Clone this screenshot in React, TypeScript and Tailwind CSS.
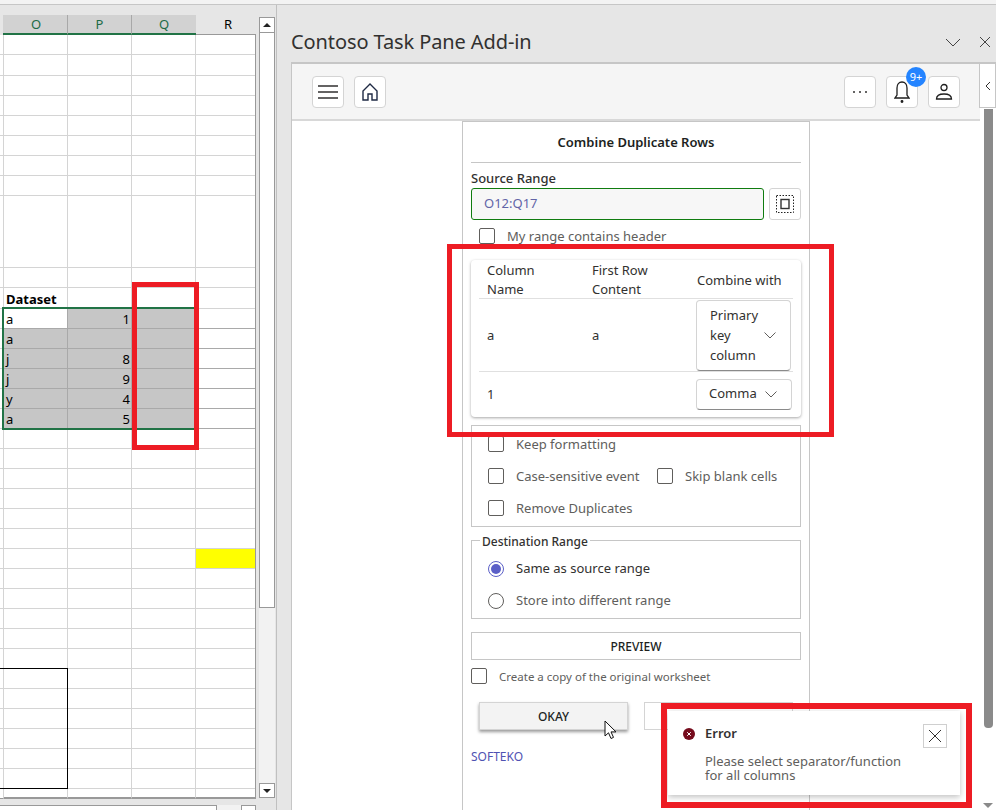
const rowHeights = [20, 21, 20, 20, 20, 20, 20, 20, 72, 20, 21, ...Array(24).fill(20), 10]

const dataRows: Record<number, [string, string]> = {
  11: ['a', '1'],
  12: ['a', ''],
  13: ['j', '8'],
  14: ['j', '9'],
  15: ['y', '4'],
  16: ['a', '5'],
}

function Checkbox() {
  return <span className="block h-4 w-4 shrink-0 rounded-[2px] border border-[#605e5c] bg-white" />
}

function CheckRow({ label }: { label: string }) {
  return (
    <div className="flex h-8 items-center gap-3">
      <Checkbox />
      <span className="pt-[2px] text-[13px] text-[#605e5c]">{label}</span>
    </div>
  )
}

function Chevron({ className }: { className: string }) {
  return (
    <svg className={className} width="12" height="7" viewBox="0 0 12 7" fill="none" stroke="#605e5c" strokeWidth="1">
      <path d="M0.500 0.500l5.500 5.500 5.500-5.500" />
    </svg>
  )
}

function ToolButton({ children }: { children: React.ReactNode }) {
  return (
    <div className="flex h-8 w-8 items-center justify-center rounded-[4px] border border-[#d4d4d4] bg-white">
      {children}
    </div>
  )
}

function Sheet() {
  return (
    <div className="flex h-[805px] w-[277px] shrink-0 border-r border-[#c0c0c0]">
      <div className="relative w-[256px] shrink-0">
        <div className="mt-[10px] flex h-[20px] text-center text-[13px] leading-[18px]">
          <div className="w-[3px]" />
          <div className="w-[65px] border-b-2 border-[#217346] border-r border-r-[#a8a8a8] bg-[#d2d2d2] pl-[2px] text-[#1d6b47]">O</div>
          <div className="w-[64px] border-b-2 border-[#217346] border-r border-r-[#a8a8a8] bg-[#d2d2d2] text-[#1d6b47]">P</div>
          <div className="w-[64px] border-b-2 border-[#217346] bg-[#d2d2d2] text-[#1d6b47]">Q</div>
          <div className="w-[60px] border-b border-[#999999] pl-[4px] text-black">R</div>
        </div>
        <div className="border-r border-[#999999] bg-white text-[13px] leading-[18px] text-black">
          {rowHeights.map((h, i) => {
            const data = dataRows[i]
            const last = i === rowHeights.length - 1
            const line = last ? 'border-b-2 border-b-[#999999]' : data ? 'border-b border-b-[#a9a9a9]' : 'border-b border-b-[#d4d4d4]'
            const colLine = data ? 'border-r border-r-[#a9a9a9]' : 'border-r border-r-[#d4d4d4]'
            return (
              <div key={i} className="flex" style={{ height: h }}>
                <div className={`w-[4px] border-r border-b border-[#d4d4d4] ${last ? 'border-b-[#999999]' : ''}`} />
                <div className={`w-[64px] pl-[2px] ${line} ${colLine} ${data && i !== 11 ? 'bg-[#c6c6c6]' : 'bg-white'} ${i === 10 ? 'pt-[2px] font-bold' : 'pt-[1px]'}`}>
                  {i === 10 ? 'Dataset' : data?.[0]}
                </div>
                <div className={`w-[64px] pr-[1px] pt-[1px] text-right ${line} ${colLine} ${data ? 'bg-[#c6c6c6]' : 'bg-white'}`}>{data?.[1]}</div>
                <div className={`w-[64px] ${line} ${colLine} ${data ? 'bg-[#c6c6c6]' : 'bg-white'}`} />
                <div className={`w-[59px] ${line} ${i === 23 ? 'bg-[#ffff00]' : 'bg-white'}`} />
              </div>
            )
          })}
        </div>
        {/* selection + bordered range sit on top of the cells */}
        <div className="absolute left-[2px] top-[302px] h-[123px] w-[194px] border-2 border-[#217346]" />
        <div className="absolute left-[-2px] top-[663px] h-[121px] w-[70px] border border-black" />
      </div>
      <div className="flex h-[793px] w-[20px] shrink-0 flex-col pt-[12px]">
        <div className="flex h-[781px] w-[16px] ml-[3px] flex-col bg-[#f2f2f2]">
          <div className="flex h-[16px] items-center justify-center border border-[#999999] bg-white">
            <span className="h-0 w-0 border-x-[4px] border-b-[4px] border-x-transparent border-b-[#222222]" />
          </div>
          <div className="h-[575px] border border-t-0 border-[#999999] bg-white" />
          <div className="mt-auto flex h-[15px] items-center justify-center border border-[#999999] bg-white">
            <span className="h-0 w-0 border-x-[4px] border-t-[4px] border-x-transparent border-t-[#222222]" />
          </div>
        </div>
      </div>
    </div>
  )
}

function TableCard() {
  return (
    <div className="mt-4 h-[157px] rounded-[4px] bg-white px-2 text-[13px] text-[#323130] shadow-[0_1px_3px_rgba(0,0,0,0.35)]">
      <div className="flex h-[39px] items-center border-b border-[#e0e0e0] pt-[2px] leading-[19px]">
        <div className="w-[105px] pl-2">Column<br />Name</div>
        <div className="w-[105px] pl-2">First Row<br />Content</div>
        <div className="pl-2">Combine with</div>
      </div>
      <div className="flex h-[73px] items-center border-b border-[#e0e0e0]">
        <div className="w-[105px] pl-2 pt-[2px]">a</div>
        <div className="w-[112px] pl-2 pt-[2px]">a</div>
        <div className="flex h-[71px] w-[95px] items-center rounded-[4px] border border-[#d4d4d4] border-b-[#8a8a8a] pl-[13px] leading-[20px]">
          <span className="w-[54px]">Primary key column</span>
          <Chevron className="ml-[0px]" />
        </div>
      </div>
      <div className="flex h-[44px] items-center">
        <div className="w-[217px] pl-2 pt-[2px]">1</div>
        <div className="flex h-[31px] w-[96px] items-center rounded-[4px] border border-[#d4d4d4] border-b-[#8a8a8a] pl-[12px]">
          <span className="w-[48px]">Comma</span>
          <Chevron className="ml-[8px]" />
        </div>
      </div>
    </div>
  )
}

function Toast() {
  return (
    <div className="absolute left-[668px] top-[711px] h-[84px] w-[292px] bg-white shadow-[0_2px_6px_rgba(0,0,0,0.25)]">
      <div className="flex items-start pl-[15px] pr-[13px] pt-[13px]">
        <div className="flex h-5 items-center gap-[10px]">
          <svg width="12" height="12" viewBox="0 0 12 12">
            <circle cx="6" cy="6" r="6" fill="#750b1c" />
            <path d="M4.200 4.200l3.600 3.600M7.800 4.200l-3.600 3.600" stroke="#ffffff" strokeWidth="1" />
          </svg>
          <span className="text-[13px] font-semibold text-[#323130]">Error</span>
        </div>
        <div className="ml-auto flex h-6 w-6 items-center justify-center border border-[#cfcfcf]">
          <svg width="14" height="14" viewBox="0 0 14 14" stroke="#323130" strokeWidth="1" fill="none">
            <path d="M1 1l12 12M13 1L1 13" />
          </svg>
        </div>
      </div>
      <div className="pl-[37px] pt-[6px] text-[13px] leading-[14px] text-[#605e5c]">
        Please select separator/function<br />for all columns
      </div>
    </div>
  )
}

function MainCard() {
  return (
    <div className="ml-[170px] h-[689px] w-[348px] overflow-hidden border border-b-0 border-[#c6c6c6] bg-white px-2">
      <div className="flex h-[41px] items-center justify-center border-b border-[#c6c6c6] pt-[2px] text-[13px] font-semibold text-[#201f1e]">
        Combine Duplicate Rows
      </div>
      <div className="h-[25px] pt-[6px] text-[13px] font-medium leading-[18px] text-[#323130]">Source Range</div>
      <div className="flex gap-[5px]">
        <div className="flex h-8 w-[293px] items-center rounded-[3px] border border-[#107c10] bg-[#f7f7f7] pl-3 text-[13px] text-[#6264a7]">O12:Q17</div>
        <div className="flex h-8 w-8 items-center justify-center rounded-[3px] border border-[#d4d4d4]">
          <svg width="18" height="18" viewBox="0 0 18 18" fill="none">
            <rect x="0.500" y="0.500" width="17" height="17" stroke="#222222" strokeDasharray="1.500 1.500" />
            <rect x="5" y="4.500" width="8" height="9" stroke="#333333" strokeWidth="1.400" />
          </svg>
        </div>
      </div>
      <div className="mt-2 flex h-4 items-center gap-3 pl-2">
        <Checkbox />
        <span className="pt-[2px] text-[13px] text-[#605e5c]">My range contains header</span>
      </div>
      <TableCard />
      <div className="mt-2 h-[102px] border border-[#c6c6c6] pl-4 pt-[2px]">
        <CheckRow label="Keep formatting" />
        <div className="flex">
          <div className="w-[169px]"><CheckRow label="Case-sensitive event" /></div>
          <CheckRow label="Skip blank cells" />
        </div>
        <CheckRow label="Remove Duplicates" />
      </div>
      <div className="relative mt-[13px] h-[79px] border border-[#c6c6c6] pl-4 pt-[12px] text-[13px]">
        <span className="absolute -top-[8px] left-[8px] bg-white px-[2px] text-[12px] font-medium leading-[18px] text-[#323130]">Destination Range</span>
        <div className="flex h-8 items-center gap-3">
          <span className="flex h-4 w-4 items-center justify-center rounded-full border border-[#5b5fc7]">
            <span className="h-[10px] w-[10px] rounded-full bg-[#5b5fc7]" />
          </span>
          <span className="text-[#323130]">Same as source range</span>
        </div>
        <div className="flex h-8 items-center gap-3">
          <span className="h-4 w-4 rounded-full border border-[#605e5c]" />
          <span className="text-[#605e5c]">Store into different range</span>
        </div>
      </div>
      <div className="mt-[13px] flex h-7 items-center justify-center border border-[#c6c6c6] pt-[2px] text-[12px] font-medium text-[#201f1e]">PREVIEW</div>
      <div className="mt-2 flex h-4 items-center gap-3">
        <Checkbox />
        <span className="pt-[2px] text-[11.5px] text-[#605e5c]">Create a copy of the original worksheet</span>
      </div>
      <div className="mt-[18px] flex gap-4 px-2">
        <div className="flex h-7 w-[149px] items-center justify-center border border-[#d4d4d4] bg-[#f3f3f3] pt-[2px] text-[12px] font-medium text-[#201f1e] shadow-[0_2px_3px_rgba(0,0,0,0.4)]">OKAY</div>
        <div className="h-7 w-[149px] border border-[#d4d4d4]" />
      </div>
      <div className="mt-[18px] text-[12px] leading-[18px] text-[#4f52b2]">SOFTEKO</div>
    </div>
  )
}

function TaskPane() {
  return (
    <div className="flex h-[805px] min-w-0 flex-1 flex-col pl-[14px]">
      <div className="flex h-[57px] items-center pt-[17px]">
        <span className="text-[20px] leading-[26px] tracking-[-0.1px] text-[#323130]">Contoso Task Pane Add-in</span>
        <div className="ml-auto flex items-center gap-[18px] pr-[5px]">
          <svg width="16" height="9" viewBox="0 0 16 9" fill="none" stroke="#444444"><path d="M1 1l7 7 7-7" /></svg>
          <svg width="12" height="12" viewBox="0 0 12 12" fill="none" stroke="#444444"><path d="M1 1l10 10M11 1L1 11" /></svg>
        </div>
      </div>
      <div className="flex min-h-0 flex-1 flex-col border-l border-t-2 border-[#c6c6c6] bg-white">
        <div className="flex min-h-0 flex-1">
          <div className="flex w-[688px] shrink-0 flex-col">
            <div className="flex h-[57px] shrink-0 items-center justify-between border-b-2 border-[#d8d8d8] bg-[#f5f5f5] pl-5 pr-5">
              <div className="flex gap-[10px]">
                <ToolButton>
                  <svg width="20" height="16" viewBox="0 0 20 16" stroke="#323130" strokeWidth="1.400"><path d="M0 2h20M0 8h20M0 14h20" /></svg>
                </ToolButton>
                <ToolButton>
                  <svg width="18" height="20" viewBox="0 0 18 20" fill="none" stroke="#1f2a44" strokeWidth="1.400"><path d="M2 9l7-7 7 7v9h-5v-6H7v6H2z" /></svg>
                </ToolButton>
              </div>
              <div className="flex gap-[10px]">
                <ToolButton>
                  <svg width="16" height="4" viewBox="0 0 16 4" fill="#323130"><circle cx="2" cy="2" r="1" /><circle cx="8" cy="2" r="1" /><circle cx="14" cy="2" r="1" /></svg>
                </ToolButton>
                <div className="relative">
                  <ToolButton>
                    <svg width="16" height="22" viewBox="0 0 16 22" fill="none" stroke="#1f1f1f" strokeWidth="1.300"><path d="M8 1c-3 0-5 2.500-5 6v7l-2 3h14l-2-3V7c0-3.500-2-6-5-6z" /><circle cx="8" cy="20.500" r="0.800" fill="#1f1f1f" /></svg>
                  </ToolButton>
                  <span className="absolute -right-[8px] -top-[9px] flex h-5 w-5 items-center justify-center rounded-full bg-[#2484ff] text-[11px] leading-none text-white">9+</span>
                </div>
                <ToolButton>
                  <svg width="18" height="18" viewBox="0 0 18 18" fill="none" stroke="#1f1f1f" strokeWidth="1.300"><circle cx="9" cy="4.500" r="3" /><path d="M1.500 16c0-3 3-5 7.500-5s7.500 2 7.500 5z" /></svg>
                </ToolButton>
              </div>
            </div>
            <MainCard />
          </div>
          <div className="flex flex-1 flex-col items-center pt-[45px]">
            <div className="h-[619px] w-[9px] rounded-b-[4px] bg-[#8a8a8a]" />
            <span className="mt-auto mb-[2px] h-0 w-0 border-x-[5px] border-t-[5px] border-x-transparent border-t-[#8a8a8a]" />
          </div>
        </div>
      </div>
    </div>
  )
}

export default function App() {
  return (
    <div className="relative h-[810px] w-[996px] overflow-hidden bg-[#e6e6e6] font-['Noto_Sans',sans-serif]">
      <div className="h-[5px] border-b border-[#c6c6c6] bg-[#f3f3f3]" />
      <div className="flex">
        <Sheet />
        <TaskPane />
      </div>

      {/* tab strip at the foot of the sheet */}
      <div className="absolute left-0 top-[805px] flex h-[5px] w-[256px]">
        <div className="w-[217px] border-t border-r border-[#999999] bg-white" />
        <div className="w-[24px] bg-[#f2f2f2]" />
        <div className="w-[15px] border border-b-0 border-[#999999] bg-white" />
      </div>

      {/* collapse tab over the pane */}
      <div className="absolute left-[979px] top-[63px] flex h-[45px] w-[17px] items-center justify-center border border-[#c6c6c6] bg-white">
        <svg width="6" height="10" viewBox="0 0 6 10" fill="none" stroke="#323130"><path d="M5 1L1 5l4 4" /></svg>
      </div>

      <Toast />

      {/* mouse pointer */}
      <svg className="absolute left-[604px] top-[720px]" width="14" height="20" viewBox="0 0 14 20">
        <path d="M1 1v15l3.500-3.200 2.500 5.700 2.500-1.100-2.500-5.500H12z" fill="#ffffff" stroke="#111111" strokeWidth="1" />
      </svg>

      {/* red annotation frames */}
      <div className="absolute left-[132px] top-[282px] h-[168px] w-[67px] border-[5px] border-[#ed1c24]" />
      <div className="absolute left-[447px] top-[244px] h-[193px] w-[387px] border-[5px] border-[#ed1c24]" />
      <div className="absolute left-[661px] top-[703px] h-[105px] w-[311px] border-[6px] border-[#ed1c24]" />
    </div>
  )
}
